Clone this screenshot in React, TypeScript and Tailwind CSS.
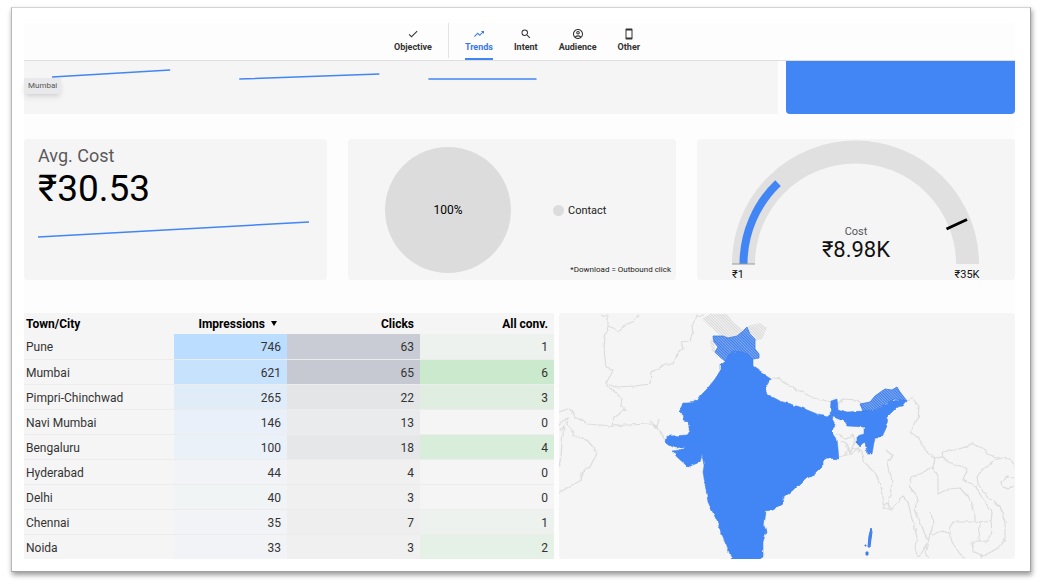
import React from 'react';
import { clsx } from 'clsx';
import {
  MdCheck,
  MdOutlineAccountCircle,
  MdOutlineStayCurrentPortrait,
  MdSearch,
  MdTrendingUp,
} from 'react-icons/md';

const tabs = [
  { label: 'Trends', icon: MdTrendingUp, active: true },
  { label: 'Intent', icon: MdSearch },
  { label: 'Audience', icon: MdOutlineAccountCircle },
  { label: 'Other', icon: MdOutlineStayCurrentPortrait },
];

const rows = [
  { city: 'Pune', impressions: 746, clicks: 63, conv: 1, heat: ['bg-[#bbddff]', 'bg-[#c9ccd5]', 'bg-[#edf2ef]'] },
  { city: 'Mumbai', impressions: 621, clicks: 65, conv: 6, heat: ['bg-[#c7e2fc]', 'bg-[#c6c9d2]', 'bg-[#cbe9cd]'] },
  { city: 'Pimpri-Chinchwad', impressions: 265, clicks: 22, conv: 3, heat: ['bg-[#e1ecf9]', 'bg-[#e4e5e7]', 'bg-[#e0eee1]'] },
  { city: 'Navi Mumbai', impressions: 146, clicks: 13, conv: 0, heat: ['bg-[#e9f0f9]', 'bg-[#eaebec]', 'bg-[#f5f5f5]'] },
  { city: 'Bengaluru', impressions: 100, clicks: 18, conv: 4, heat: ['bg-[#eaf1f9]', 'bg-[#e6e7e9]', 'bg-[#d9eddb]'] },
  { city: 'Hyderabad', impressions: 44, clicks: 4, conv: 0, heat: ['bg-[#f1f3f6]', 'bg-[#f0f0f1]', 'bg-[#f5f5f5]'] },
  { city: 'Delhi', impressions: 40, clicks: 3, conv: 0, heat: ['bg-[#f1f4f5]', 'bg-[#f0f0f1]', 'bg-[#f5f5f5]'] },
  { city: 'Chennai', impressions: 35, clicks: 7, conv: 1, heat: ['bg-[#f2f3f6]', 'bg-[#eeeeef]', 'bg-[#edf2ee]'] },
  { city: 'Noida', impressions: 33, clicks: 3, conv: 2, heat: ['bg-[#f2f3f6]', 'bg-[#f0f0f1]', 'bg-[#e5f0e6]'] },
];

const borders = [
  'M42 2 49 3 49 14 46 24 45 36 47 54 54 58 47 70 56 74 76 73 91 71 92 59 99 56 106 51 114 51 119 39 124 36 122 29 131 28 134 19 133 13 138 3 144 2',
  'M49 14 59 18 68 11 76 8 79 2',
  'M47 70 53 78 63 85 62 93 67 96 56 104 53 114',
  'M0 99 11 95 16 104 29 111 53 113 66 112 93 111 101 118 103 124 107 127',
  'M91 107 98 114 100 106M0 113 9 104 8 111 16 123 29 128 38 139 31 154 23 159 21 168 11 173 0 180',
  'M1 118 5 113 3 129 2 143 0 154',
  'M212 66 219 65 231 73 241 78 254 85 272 89',
  'M278 93 284 86 298 87 303 91',
  'M278 121 288 127 294 121 296 128 293 135 303 139 304 148 316 159 321 171 324 181 324 194 333 196 344 184 349 189 353 206 358 223 356 234 358 244',
  'M280 144 293 141 298 134 300 140M285 142 289 136 292 139 294 132M282 128 288 133 292 141',
  'M327 137 334 143 329 149 333 169 331 183 329 194M324 193 328 190 332 195',
  'M348 88 354 84 360 93 359 106 351 119 359 124 368 139 376 146 384 144 383 139 401 136 413 131 426 136 428 141 441 145 451 146 455 153',
  'M441 145 428 153 418 163 419 171 428 183 441 194 446 209 446 226 438 236 424 243 414 238',
  'M376 146 374 154 361 161 352 164 350 173 359 184 356 196 364 216 369 229 359 244',
  'M374 154 379 166 379 181 389 176 401 175 409 184 416 199 416 209 394 209 390 216 393 229 401 241 406 244',
  'M416 209 421 210 432 208 433 219 428 228 419 228 413 229 414 238 424 245M421 210 420 228',
  'M384 144 389 149 401 153 409 156 404 166 416 173 424 186 433 199 432 208',
  'M371 200 375 208 371 223 384 217 390 222M371 223 366 238 370 245',
  'M455 165 448 164 443 169 444 174 449 176 455 173',
];

const india =
  'M174 38 184 39 191 43 194 46 194 54 201 59 212 66 206 76 208 81 221 88 241 94 258 101 271 103 272 88 278 86 279 96 288 99 304 98 316 97 326 91 336 86 348 88 344 93 338 94 329 103 328 113 323 124 316 124 313 141 308 141 306 129 301 134 298 129 298 123 305 121 305 114 288 113 285 108 274 104 273 108 277 113 273 118 278 126 279 136 280 146 268 145 263 148 263 154 256 161 248 164 238 174 224 185 223 191 213 197 207 198 205 213 207 219 204 229 204 244 199 247 173 247 168 233 162 219 158 208 149 189 144 159 145 153 143 141 141 149 129 154 118 144 113 138 121 137 126 133 118 135 109 132 106 127 111 123 129 122 131 120 129 109 124 108 123 99 119 98 124 89 128 89 138 88 143 81 148 76 156 66 161 58 161 51 166 48 169 43Z';

const kashmir =
  'M154 23 164 23 169 25 178 23 183 19 188 14 191 21 196 26 196 36 200 41 200 45 194 46 191 43 184 39 174 38 169 43 166 48 161 44 156 39 159 34 155 29Z';

const arunachal = 'M301 91 311 89 316 83 323 78 326 76 333 77 338 74 341 79 348 88 336 86 326 91 316 97 304 98Z';

const TopNav = () => (
  <nav className="flex justify-center border-b border-[#dedede] bg-[#fdfdfd] pr-[5px] text-[9px] leading-3 font-bold text-[#333]">
    <div className="mb-0.5 flex border-r border-[#e4e4e4] pr-4">
      <button className="flex flex-col items-center pt-1">
        <MdCheck className="size-3.5 p-px" />
        Objective
      </button>
    </div>
    <div className="flex gap-[21px] pl-4">
      {tabs.map(({ label, icon: Icon, active }) => (
        <button
          key={label}
          className={clsx(
            'flex flex-col items-center border-b-2 pt-1 pb-[5px]',
            active ? 'border-[#4285f4] text-[#3b78e7]' : 'border-transparent'
          )}
        >
          <Icon className="size-3.5 p-px" />
          {label}
        </button>
      ))}
    </div>
  </nav>
);

const TrendStrip = () => (
  <section className="grid grid-cols-[753fr_229fr] gap-2">
    <div className="relative bg-[#f5f5f5]">
      <svg viewBox="0 0 753 53" className="block w-full" fill="none" stroke="#4285f4" strokeWidth="1.5">
        <path d="M28 16 146 9M215 18 355 13M404 18H512" />
      </svg>
      <div className="absolute top-[17px] left-0 bg-[#e9e9eb] px-1 text-[8px] leading-4 text-[#555] shadow-md">
        Mumbai
      </div>
    </div>
    <div className="rounded-b bg-[#4285f4]" />
  </section>
);

const AvgCost = () => (
  <div className="rounded bg-[#f5f5f5] px-3.5 pt-[5px]">
    <h2 className="text-lg leading-6 text-[#5a5a5a]">Avg. Cost</h2>
    <p className="text-[37px] leading-[42px] text-black">₹30.53</p>
    <svg viewBox="0 0 275 20" className="mt-[9px] block w-full" fill="none" stroke="#4285f4" strokeWidth="1.5">
      <path d="M0 18 271 3" />
    </svg>
  </div>
);

const ContactShare = () => (
  <div className="flex rounded bg-[#f5f5f5] pt-2 pr-[5px] pb-1.5 pl-[37px]">
    <div className="flex size-[126px] items-center justify-center rounded-full bg-[#dcdcdc] text-xs text-black">100%</div>
    <div className="grid flex-1 grid-rows-[1fr_auto_1fr]">
      <div className="row-start-2 flex items-center gap-1 pl-[42px] text-[11px] leading-4 text-[#222]">
        <span className="size-[11px] rounded-full bg-[#dcdcdc]" />
        Contact
      </div>
      <p className="row-start-3 self-end text-right text-[8px] leading-2 text-[#222]">*Download = Outbound click</p>
    </div>
  </div>
);

const CostGauge = () => (
  <div className="rounded bg-[#f5f5f5]">
    <svg viewBox="0 0 318 141" className="block w-full" fill="none">
      <path d="M46.500 125a112 112 0 0 1 224 0" stroke="#e0e0e0" strokeWidth="23" />
      <path d="M46.500 125a112 112 0 0 1 34.500 -80.900" stroke="#4285f4" strokeWidth="8" />
      <path d="M35 125H58" stroke="#9a9a9a" />
      <path d="M249.500 90 270 80.500" stroke="#000" strokeWidth="3" />
      <g textAnchor="middle">
        <text x="159" y="96" fontSize="11" fill="#555">Cost</text>
        <text x="159" y="118" fontSize="22" fill="#111">₹8.98K</text>
        <text x="41" y="139" fontSize="11" fill="#111">₹1</text>
        <text x="270" y="139" fontSize="11" fill="#111">₹35K</text>
      </g>
    </svg>
  </div>
);

const CityTable = () => (
  <table className="w-full table-fixed bg-[#f5f5f5] text-xs text-[#333]">
    <thead>
      <tr className="h-[21px] text-right leading-5 text-black">
        <th className="w-[150px] pl-0.5 text-left">Town/City</th>
        <th className="w-[113px] pr-2.5">
          <button className="inline-flex items-center gap-1.5">
            Impressions
            <svg viewBox="0 0 6 5" className="w-1.5" fill="currentColor">
              <path d="M0 0H6L3 5Z" />
            </svg>
          </button>
        </th>
        <th className="w-[133px] pr-1.5">Clicks</th>
        <th className="w-[134px] pr-1.5">All conv.</th>
      </tr>
    </thead>
    <tbody>
      {rows.map((row) => (
        <tr key={row.city} className="h-[25px] border-b border-[#ececec] text-right leading-[22px] last:border-b-0">
          <td className="pt-0.5 pl-0.5 text-left">{row.city}</td>
          <td className={clsx('pt-0.5 pr-1.5', row.heat[0])}>{row.impressions}</td>
          <td className={clsx('pt-0.5 pr-1.5', row.heat[1])}>{row.clicks}</td>
          <td className={clsx('pt-0.5 pr-1.5', row.heat[2])}>{row.conv}</td>
        </tr>
      ))}
    </tbody>
  </table>
);

const IndiaMap = () => (
  <div className="rounded bg-[#f5f5f5]">
    <svg viewBox="0 0 456 246" className="block w-full" role="img" aria-label="Map of India">
      <defs>
        <pattern id="hatchBlue" width="2" height="2" patternUnits="userSpaceOnUse" patternTransform="rotate(-45)">
          <rect width="2" height="2" fill="#8fb6f8" />
          <rect width="1.200" height="2" fill="#3d7de8" />
        </pattern>
        <pattern id="hatchGrey" width="2" height="2" patternUnits="userSpaceOnUse" patternTransform="rotate(-45)">
          <rect width="1" height="2" fill="#d6d6d6" />
        </pattern>
        <filter id="coast" x="0" y="0" width="456" height="246" filterUnits="userSpaceOnUse" colorInterpolationFilters="sRGB">
          <feTurbulence type="fractalNoise" baseFrequency="0.15" numOctaves="2" seed="4" />
          <feDisplacementMap in="SourceGraphic" scale="4" xChannelSelector="R" yChannelSelector="G" />
        </filter>
      </defs>
      <g filter="url(#coast)">
        <path d={borders.join('')} fill="none" stroke="#dcdcdc" strokeWidth="1.200" strokeLinejoin="round" />
        <path d={india} fill="#4285f4" stroke="#3d7de8" strokeWidth="0.500" />
      </g>
      <path
        d="M143 6 151 1H168L174 9 183 16 186 18 178 23 169 25 161 22 151 14ZM189 13 201 10 208 15 203 26 196 28 191 21ZM154 24 151 29 153 38 159 45 156 36Z"
        fill="url(#hatchGrey)"
      />
      <path d={kashmir} fill="url(#hatchBlue)" stroke="#3d7de8" strokeWidth="0.800" />
      <path d={arunachal} fill="url(#hatchBlue)" stroke="#3d7de8" strokeWidth="0.800" />
      <path
        d="M312 215 313 219 312 226 311 234 309 234 310 223ZM307 239H309V242H307ZM306 232H307V233H306Z"
        fill="#4285f4"
        stroke="#3d7de8"
      />
    </svg>
  </div>
);

const App: React.FC = () => (
  <div className="bg-white px-[11px] pt-[7px] pb-3.5 font-[Roboto,sans-serif]">
    <main className="border border-t-[#d4d4d4] border-r-[#a3a3a3] border-b-[#a3a3a3] border-l-[#b8b8b8] bg-white pt-[15px] pr-[15px] pb-3 pl-3 shadow-[1px_3px_5px_rgba(0,0,0,0.4)]">
      <div className="bg-[#fdfdfd]">
        <TopNav />
        <TrendStrip />
        <section className="mt-[25px] grid grid-cols-[303fr_328fr_318fr] gap-[21px]">
          <AvgCost />
          <ContactShare />
          <CostGauge />
        </section>
        <section className="mt-[33px] grid grid-cols-[530fr_456fr] gap-[5px]">
          <CityTable />
          <IndiaMap />
        </section>
      </div>
    </main>
  </div>
);

export default App;
